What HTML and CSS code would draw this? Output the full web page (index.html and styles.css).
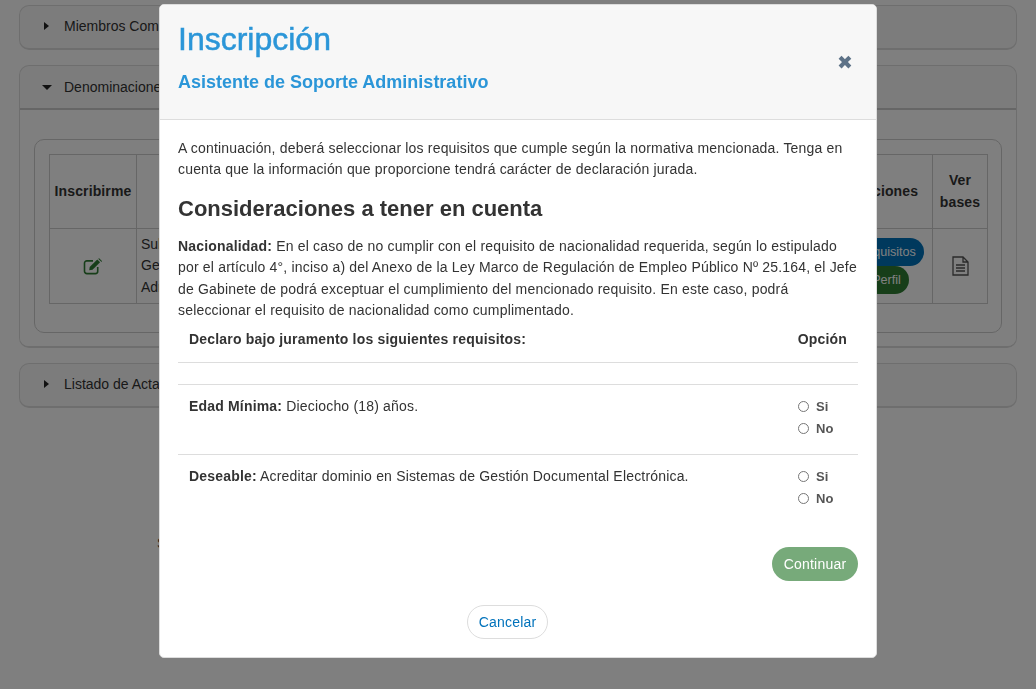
FILE: index.html
```html
<!DOCTYPE html>
<html lang="es">
<head>
<meta charset="utf-8">
<title>Inscripción</title>
<link rel="stylesheet" href="styles.css">
</head>
<body>
<main class="page">
  <section class="panel">
    <div class="panel-head"><span class="caret-right"></span>Miembros Comité</div>
  </section>
  <section class="panel">
    <div class="panel-head open"><span class="caret-down"></span>Denominaciones</div>
    <div class="panel-body">
      <div class="card">
        <table class="jobs">
          <tr>
            <th class="c-ins">Inscribirme</th>
            <th class="c-name"></th>
            <th class="c-acc">Acciones</th>
            <th class="c-ver">Ver bases</th>
          </tr>
          <tr>
            <td class="center">
              <svg class="cell-icon" viewBox="0 0 20 18" width="20" height="17"><path d="M15 9.500v4.500a2.500 2.500 0 0 1-2.500 2.500H3.500A2.500 2.500 0 0 1 1 14V5.500A2.500 2.500 0 0 1 3.500 3H10" fill="none" stroke="#2e7d33" stroke-width="1.700"/><path d="M6.500 9.500 14.500 1.500 17.500 4.500 9.500 12.500 6 13z" fill="#2e7d33"/><path d="M15.500.8l1-.5 3 3-.5 1z" fill="#2e7d33"/></svg>
            </td>
            <td class="name">Subdirector de<br>Gestión<br>Administrativa</td>
            <td class="acc">
              <span class="pill blue">Requisitos</span>
              <span class="pill green">Perfil</span>
            </td>
            <td class="center">
              <svg class="cell-icon" viewBox="0 0 17 20" width="17" height="20"><path d="M1 1h10l5 5v13H1z M11 1v5h5" fill="none" stroke="#555" stroke-width="1.300"/><path d="M4 9h9M4 12h9M4 15h9" stroke="#555" stroke-width="1.300"/></svg>
            </td>
          </tr>
        </table>
      </div>
    </div>
  </section>
  <section class="panel">
    <div class="panel-head"><span class="caret-right"></span>Listado de Actas</div>
  </section>
  <p class="behind">Sistema</p>
</main>

<div class="backdrop">
  <div class="modal">
    <header class="modal-head">
      <div>
        <h1>Inscripción</h1>
        <h2>Asistente de Soporte Administrativo</h2>
      </div>
      <span class="close">✖</span>
    </header>
    <div class="modal-body">
      <p class="intro">A continuación, deberá seleccionar los requisitos que cumple según la normativa mencionada. Tenga en cuenta que la información que proporcione tendrá carácter de declaración jurada.</p>
      <h3>Consideraciones a tener en cuenta</h3>
      <p class="note"><strong>Nacionalidad:</strong> En el caso de no cumplir con el requisito de nacionalidad requerida, según lo estipulado por el artículo 4°, inciso a) del Anexo de la Ley Marco de Regulación de Empleo Público Nº 25.164, el Jefe de Gabinete de podrá exceptuar el cumplimiento del mencionado requisito. En este caso, podrá seleccionar el requisito de nacionalidad como cumplimentado.</p>
      <div class="req-head">
        <strong>Declaro bajo juramento los siguientes requisitos:</strong>
        <strong class="opt">Opción</strong>
      </div>
      <div class="req-empty"></div>
      <div class="req">
        <div class="req-text"><strong>Edad Mínima:</strong> Dieciocho (18) años.</div>
        <div class="choices">
          <label><input type="radio" name="a"><span>Si</span></label>
          <label><input type="radio" name="a"><span>No</span></label>
        </div>
      </div>
      <div class="req req-last">
        <div class="req-text"><strong>Deseable:</strong> Acreditar dominio en Sistemas de Gestión Documental Electrónica.</div>
        <div class="choices">
          <label><input type="radio" name="b"><span>Si</span></label>
          <label><input type="radio" name="b"><span>No</span></label>
        </div>
      </div>
      <div class="actions"><button class="continue" type="button">Continuar</button></div>
      <div class="cancel-row"><button class="cancel" type="button">Cancelar</button></div>
    </div>
  </div>
</div>
</body>
</html>
```
FILE: styles.css
```css
* { box-sizing: border-box; }
html, body { margin: 0; height: 100%; overflow: hidden; }
body { font-family: "Liberation Sans", Arial, sans-serif; font-size: 14px; color: #333; background: #fff; }

.page { padding: 5px 19px 0 19px; }
.panel { border: 1px solid #ddd; border-bottom-width: 2px; border-radius: 10px; margin-bottom: 15px; overflow: hidden; background: #f9f9f9; }
.panel-head { height: 42px; display: flex; align-items: center; padding: 0 0 3px 24px; color: #333; white-space: nowrap; }
.panel-head.open { height: 44px; padding-bottom: 0; border-bottom: 2px solid #ccc; }
.caret-right { width: 0; height: 0; border-left: 5px solid #222; border-top: 4px solid transparent; border-bottom: 4px solid transparent; margin-right: 15px; }
.caret-down { width: 0; height: 0; margin-left: -2px; border-top: 5px solid #222; border-left: 5px solid transparent; border-right: 5px solid transparent; margin-right: 12px; }
.panel-body { background: #fff; padding: 29px 14px 13px; }
.card { border: 1px solid #ccc; border-radius: 10px; padding: 14px; height: 194px; }

.jobs { border-collapse: collapse; width: 939px; table-layout: fixed; }
.jobs th, .jobs td { border: 1px solid #ccc; padding: 0 4px; line-height: 21.500px; }
.jobs th { height: 74px; text-align: center; letter-spacing: .12px; }
.jobs td { height: 75px; }
.c-ins { width: 87px; }
.c-acc { width: 92px; }
.c-ver { width: 55px; }
.center { text-align: center; }
.cell-icon { display: block; margin: 0 auto; }
.name { white-space: nowrap; }
.acc { font-size: 12.600px; }
.pill { display: block; width: max-content; margin: 0 auto; padding: 0 8px; line-height: 28px; border-radius: 14px; color: #fff; }
.blue { background: #0072bb; }
.green { background: #2e7d33; }
.behind { margin: 127px 0 0 138px; white-space: nowrap; }

.backdrop { position: fixed; inset: 0; background: rgba(0, 0, 0, .5); }
.modal { position: absolute; left: 159px; top: 4px; width: 718px; height: 654px; background: #fff; border-radius: 5px; border: 1px solid #ddd; overflow: hidden; display: flex; flex-direction: column; }
.modal-head { height: 115px; flex: none; background: #f7f7f7; border-bottom: 1px solid #ddd; padding: 11px 18px 0; display: flex; justify-content: space-between; align-items: flex-start; }
h1 { margin: 0; font-size: 32px; line-height: 46px; font-weight: 400; color: #2b96d8; -webkit-text-stroke: .5px #2b96d8; }
h2 { margin: 9px 0 0; font-size: 18px; line-height: 22px; font-weight: 700; color: #2b96d8; }
.close { font-size: 19px; color: #5d7287; margin: 37px 5px 0 0; line-height: 20px; }

.modal-body { flex: 1; padding: 18px 18px 0; }
p { margin: 0; }
.intro, .note { line-height: 21.300px; letter-spacing: .18px; }
h3 { margin: 15.500px 0 14px; font-size: 22px; line-height: 26px; font-weight: 700; color: #333; }

.req-head { display: flex; justify-content: space-between; padding: 0 11px; height: 42px; line-height: 36px; border-bottom: 1px solid #ddd; letter-spacing: .18px; }
.req-empty { height: 22px; border-bottom: 1px solid #ddd; }
.req { display: flex; justify-content: space-between; height: 70px; padding: 10px 11px 0; border-bottom: 1px solid #ddd; letter-spacing: .18px; }
.req-last { border-bottom: 0; }
.req-text { line-height: 22px; }
.choices { width: 49px; }
.choices label { display: flex; align-items: center; height: 22px; font-size: 13px; font-weight: 700; color: #555; }
.choices input { width: 11px; height: 11px; margin: 0 7px 0 0; }

.actions { display: flex; justify-content: flex-end; margin-top: 22px; }
.continue { height: 34px; width: 86px; border: 0; border-radius: 17px; background: #77aa7a; color: #fff; font: 14px "Liberation Sans", Arial, sans-serif; letter-spacing: .2px; }
.cancel-row { display: flex; justify-content: center; margin: 24px 21px 0 0; }
.cancel { height: 34px; width: 81px; border: 1px solid #ddd; border-radius: 17px; background: #fff; color: #0072bb; font: 14px "Liberation Sans", Arial, sans-serif; letter-spacing: .2px; }
```
